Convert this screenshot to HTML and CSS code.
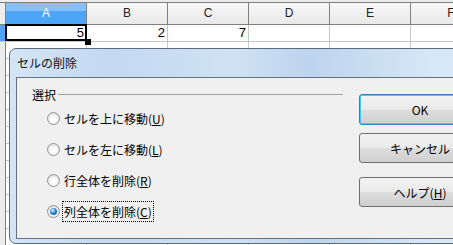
FILE: index.html
```html
<!DOCTYPE html>
<html lang="ja">
<head>
    <meta charset="UTF-8">
    <title>セルの削除</title>
    <link rel="stylesheet" href="styles.css">
</head>
<body>
    <div class="sheet">
        <div class="sheet-top"></div>
        <div class="row head">
            <div class="corner"></div>
            <div class="col sel">A</div>
            <div class="col">B</div>
            <div class="col">C</div>
            <div class="col">D</div>
            <div class="col">E</div>
            <div class="col">F</div>
        </div>
        <div class="row">
            <div class="rh sel"></div>
            <div class="cell">5</div>
            <div class="cell">2</div>
            <div class="cell">7</div>
            <div class="cell"></div>
            <div class="cell"></div>
            <div class="cell"></div>
        </div>
        <div class="empty-rows"></div>
        <div class="cursor"><span class="handle"></span></div>
    </div>

    <div class="dialog">
        <div class="title">セルの削除</div>
        <div class="client">
            <div class="selection">
                <div class="group-head">
                    <span>選択</span>
                    <span class="line"></span>
                </div>
                <div class="opts">
                    <div class="opt"><span class="radio"></span><span class="lbl">セルを上に移動(<u>U</u>)</span></div>
                    <div class="opt"><span class="radio"></span><span class="lbl">セルを左に移動(<u>L</u>)</span></div>
                    <div class="opt"><span class="radio"></span><span class="lbl">行全体を削除(<u>R</u>)</span></div>
                    <div class="opt checked"><span class="radio"></span><span class="lbl">列全体を削除(<u>C</u>)</span></div>
                </div>
            </div>
            <div class="buttons">
                <button class="btn default">OK</button>
                <button class="btn cancel">キャンセル</button>
                <button class="btn help">ヘルプ(<u>H</u>)</button>
            </div>
        </div>
    </div>
</body>
</html>
```

FILE: styles.css
```css
body {
    margin: 0;
    width: 453px;
    height: 245px;
    overflow: hidden;
    position: relative;
    background: #fff;
    font-family: "Liberation Sans", Arial, sans-serif;
}

/* spreadsheet behind the dialog */
.sheet {
    position: relative;
    width: 492px;
    height: 245px;
}
.sheet-top {
    height: 3px;
    background: linear-gradient(#ececec 0 2px, #7f7f7f 2px);
}
.row {
    display: flex;
    height: 17px;
    box-sizing: border-box;
    border-bottom: 1px solid #c6c6c6;
}
.row.head {
    height: 22px;
    border-bottom: 1px solid #7f7f7f;
    background: linear-gradient(#f7f7f7, #e9e9e9);
}
.corner, .rh {
    width: 6px;
    flex: none;
    box-sizing: border-box;
    border-right: 1px solid #7f7f7f;
    background: #ececec;
}
.rh.sel {
    background: #4fa2f5;
}
.col {
    width: 81px;
    flex: none;
    box-sizing: border-box;
    border-right: 1px solid #7f7f7f;
    text-align: center;
    font-size: 12px;
    line-height: 21px;
    color: #222;
}
.col.sel {
    background: linear-gradient(#86c0fb 0 40%, #4ea4f6 40%);
    color: #fff;
}
.cell {
    width: 81px;
    flex: none;
    box-sizing: border-box;
    border-right: 1px solid #c6c6c6;
    text-align: right;
    padding-right: 2px;
    font-size: 13px;
    line-height: 16px;
    color: #000;
}
.empty-rows {
    height: 210px;
    background:
        linear-gradient(to right, #ececec 0 5px, #7f7f7f 5px 6px, transparent 6px),
        repeating-linear-gradient(to bottom, transparent 0 16px, #c6c6c6 16px 17px),
        repeating-linear-gradient(to right, transparent 0 80px, #c6c6c6 80px 81px);
    background-position: 0 0, 0 0, 6px 0;
}
.cursor {
    position: absolute;
    left: 5px;
    top: 24px;
    width: 82px;
    height: 17px;
    box-sizing: border-box;
    border: 2px solid #000;
}
.handle {
    position: absolute;
    left: 100%;
    top: 100%;
    width: 6px;
    height: 6px;
    background: #000;
}

/* dialog window */
.dialog {
    position: absolute;
    left: 9px;
    top: 48px;
    width: 500px;
    height: 196px;
    box-sizing: border-box;
    border: 1px solid #5b6c7f;
    border-radius: 7px 0 0 7px;
    padding: 0 0 4px 6px;
    display: flex;
    flex-direction: column;
    background: linear-gradient(to right, #d3e5f7 0%, #c3d9f0 20%, #cfe2f5 45%, #bcd4ed 60%, #d6e7f7 85%, #dde9f6 100%);
    font-family: "Noto Sans CJK JP", "Noto Sans", sans-serif;
    color: #000;
}
.title {
    height: 28px;
    line-height: 28px;
    padding-left: 1px;
    font-size: 12px;
    color: #111;
}
.client {
    flex: 1;
    display: flex;
    border: 1px solid #66737f;
    border-right: none;
    background: #f0f0f0;
}
.selection {
    width: 326px;
    box-sizing: border-box;
    padding: 8px 0 0 15px;
}
.group-head {
    display: flex;
    align-items: center;
    height: 16px;
    font-size: 12px;
}
.group-head .line {
    flex: 1;
    height: 1px;
    margin-left: 2px;
    background: #a0a0a0;
}
.opts {
    margin-top: 1px;
}
.opt {
    height: 31px;
    display: flex;
    align-items: center;
    padding-left: 15px;
    font-size: 12px;
}
.radio {
    width: 13px;
    height: 13px;
    box-sizing: border-box;
    border-radius: 50%;
    border: 1px solid #939393;
    background: radial-gradient(circle at 50% 60%, #ffffff 0 30%, #e0e0e0 75%);
    margin-right: 3px;
    position: relative;
}
.opt.checked .radio::after {
    content: "";
    position: absolute;
    left: 2px;
    top: 2px;
    width: 7px;
    height: 7px;
    border-radius: 50%;
    background: radial-gradient(circle at 40% 35%, #b6e2ff 0 15%, #2a7fd0 45%, #0b4f93 100%);
}
.lbl {
    line-height: 19px;
    padding: 0 1px;
}
.opt.checked .lbl {
    outline: 1px dotted #000;
}

.buttons {
    margin-left: 16px;
    padding-top: 16px;
    display: flex;
    flex-direction: column;
}
.btn {
    width: 122px;
    height: 30px;
    box-sizing: border-box;
    border: 1px solid #707070;
    border-radius: 3px;
    background: linear-gradient(#f2f2f2 0%, #ebebeb 48%, #dddddd 52%, #cfcfcf 100%);
    font-family: "Noto Sans CJK JP", "Noto Sans", sans-serif;
    font-size: 12px;
    color: #000;
    padding: 0;
}
.btn.default {
    height: 31px;
    border-color: #3c7fb1;
    box-shadow: inset 0 0 0 1px #48c6f5;
}
.btn.cancel {
    margin-top: 8px;
}
.btn.help {
    margin-top: 14px;
}
```
